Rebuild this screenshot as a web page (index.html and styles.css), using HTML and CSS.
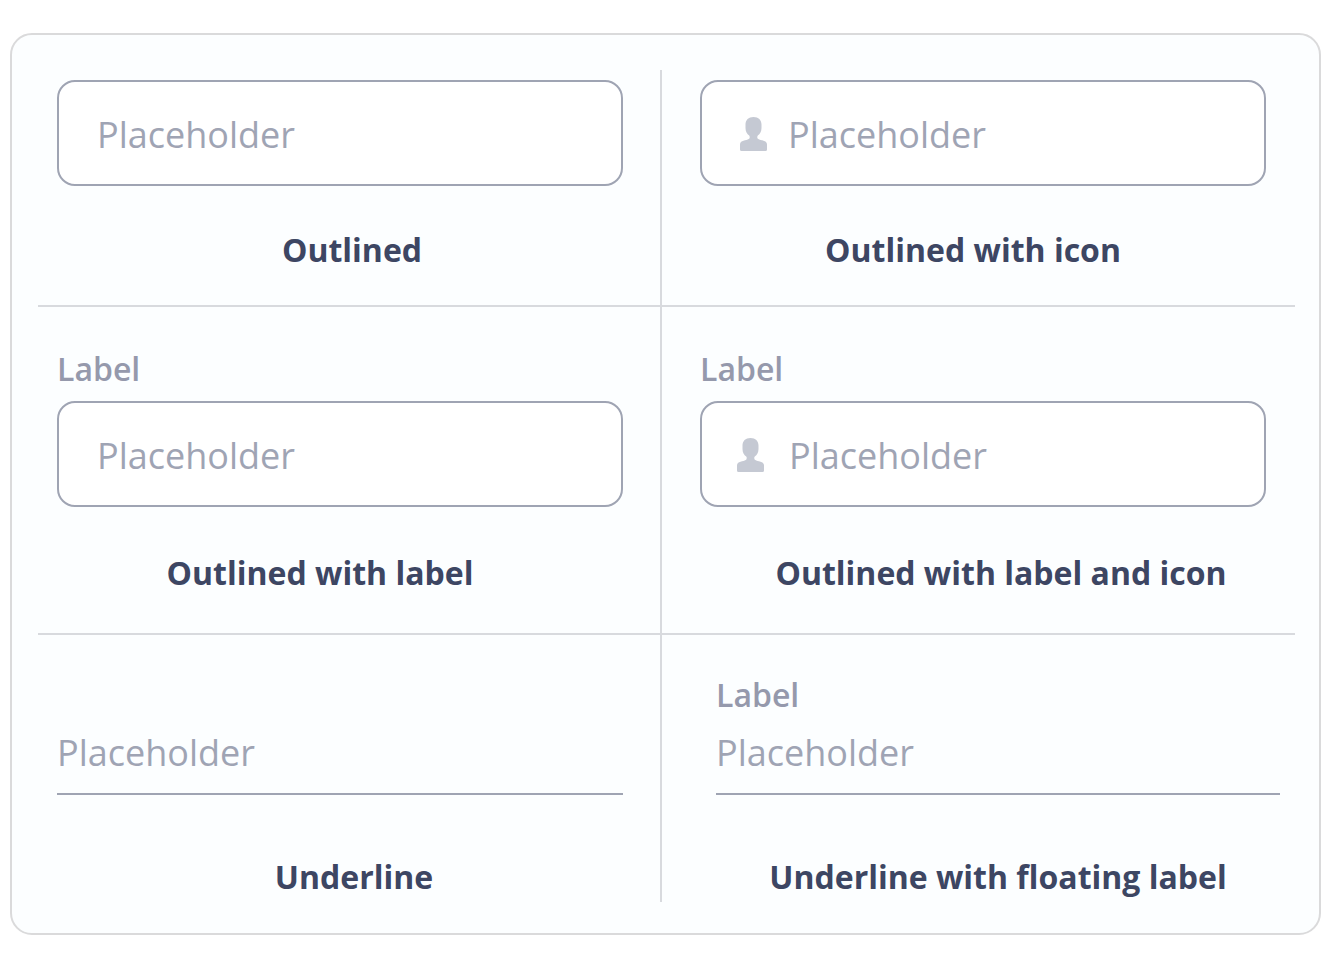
FILE: index.html
```html
<!DOCTYPE html>
<html lang="en">
<head>
<meta charset="utf-8">
<meta name="viewport" content="width=device-width, initial-scale=1">
<title>Text field variants</title>
<link rel="stylesheet" href="styles.css">
</head>
<body>
<main class="card">
  <div class="row row-first">
    <section class="cell cell-left">
      <div class="box"><input class="input" type="text" placeholder="Placeholder" aria-labelledby="c1"></div>
      <h2 class="caption nudge-24" id="c1">Outlined</h2>
    </section>
    <section class="cell cell-right">
      <div class="box box-icon">
        <svg class="icon" viewBox="0 0 28 34" aria-hidden="true"><path d="M13.500 0C18.500 0 21.500 3 21.500 7.500V11C21.500 14.500 20 17 17.800 18.600C17.200 19.200 17.100 20.600 17.600 21.400C18.200 22.300 20 22.700 22 23.200C25.500 24 27 25.300 27 27.500V32.500Q27 34 25.500 34H1.500Q0 34 0 32.500V27.500C0 25.300 1.500 24 5 23.200C7 22.700 8.800 22.300 9.400 21.400C9.900 20.600 9.800 19.200 9.200 18.600C7 17 5.500 14.500 5.500 11V7.500C5.500 3 8.500 0 13.500 0Z"/></svg>
        <input class="input" type="text" placeholder="Placeholder" aria-labelledby="c2">
      </div>
      <h2 class="caption nudge-back-20" id="c2">Outlined with icon</h2>
    </section>
  </div>
  <div class="row row-labelled">
    <section class="cell cell-left">
      <label class="label" for="f3">Label</label>
      <div class="box"><input class="input" id="f3" type="text" placeholder="Placeholder"></div>
      <h2 class="caption nudge-back-40">Outlined with label</h2>
    </section>
    <section class="cell cell-right">
      <label class="label" for="f4">Label</label>
      <div class="box box-icon box-icon-wide">
        <svg class="icon" viewBox="0 0 28 34" aria-hidden="true"><path d="M13.500 0C18.500 0 21.500 3 21.500 7.500V11C21.500 14.500 20 17 17.800 18.600C17.200 19.200 17.100 20.600 17.600 21.400C18.200 22.300 20 22.700 22 23.200C25.500 24 27 25.300 27 27.500V32.500Q27 34 25.500 34H1.500Q0 34 0 32.500V27.500C0 25.300 1.500 24 5 23.200C7 22.700 8.800 22.300 9.400 21.400C9.900 20.600 9.800 19.200 9.200 18.600C7 17 5.500 14.500 5.500 11V7.500C5.500 3 8.500 0 13.500 0Z"/></svg>
        <input class="input" id="f4" type="text" placeholder="Placeholder">
      </div>
      <h2 class="caption nudge-36">Outlined with label and icon</h2>
    </section>
  </div>
  <div class="row row-last">
    <section class="cell cell-left">
      <div class="line"><input class="input" type="text" placeholder="Placeholder" aria-labelledby="c5"></div>
      <h2 class="caption nudge-28" id="c5">Underline</h2>
    </section>
    <section class="cell cell-right cell-inset">
      <label class="label" for="f6">Label</label>
      <div class="line"><input class="input" id="f6" type="text" placeholder="Placeholder"></div>
      <h2 class="caption">Underline with floating label</h2>
    </section>
  </div>
</main>
</body>
</html>
```
FILE: styles.css
```css
* {
  box-sizing: border-box;
}

body {
  margin: 0;
  padding: 33px 15px 19px 10px;
  background: #fff;
  font-family: "Open Sans", "Noto Sans", sans-serif;
}

.card {
  padding: 35px 24px 31px 26px;
  border: 2px solid #dadadb;
  border-radius: 22px;
  background: #fcfeff;
}

.row {
  display: grid;
  grid-template-columns: minmax(0, 624fr) minmax(0, 633fr);
  border-bottom: 2px solid #d8dade;
}

.row-last {
  border-bottom: 0;
}

.cell {
  display: flex;
  flex-direction: column;
}

.cell-left {
  padding: 0 37px 0 19px;
  border-right: 2px solid #d8dade;
}

.cell-right {
  padding: 0 29px 0 38px;
}

.cell-inset {
  padding: 0 15px 0 54px;
}

.row-first .cell {
  padding-top: 10px;
  padding-bottom: 33px;
}

.row-labelled .cell {
  padding-top: 40px;
  padding-bottom: 38px;
}

.row-last .cell {
  justify-content: flex-end;
  padding-top: 38px;
  padding-bottom: 3px;
}

.label {
  align-self: flex-start;
  margin-bottom: 10px;
  color: #9599ac;
  font-size: 32px;
  font-weight: 600;
  line-height: 44px;
}

.box {
  display: flex;
  align-items: center;
  height: 106px;
  padding: 2px 38px 0;
  border: 2px solid #9fa4b3;
  border-radius: 18px;
  background: #fff;
}

.box-icon {
  gap: 20px;
}

.box-icon-wide {
  gap: 24px;
  padding-left: 35px;
}

.icon {
  flex: none;
  width: 28px;
  height: 34px;
  fill: #c5c9d3;
}

.input {
  flex: 1;
  min-width: 0;
  height: 50px;
  padding: 0;
  border: 0;
  outline: 0;
  background: transparent;
  color: #3d4663;
  font-family: inherit;
  font-size: 36px;
  font-weight: 400;
}

.input::placeholder {
  color: #9fa4b4;
  opacity: 1;
}

.line {
  display: flex;
  padding-bottom: 16px;
  border-bottom: 2px solid #9fa4b3;
}

.caption {
  margin: 44px 0 0;
  color: #3d4663;
  font-size: 32px;
  font-weight: 700;
  line-height: 44px;
  text-align: center;
}

.row-first .caption {
  margin-top: 42px;
}

.row-last .caption {
  margin-top: 60px;
}

.nudge-24 {
  padding-left: 24px;
}

.nudge-28 {
  padding-left: 28px;
}

.nudge-36 {
  padding-left: 36px;
}

.nudge-back-20 {
  padding-right: 20px;
}

.nudge-back-40 {
  padding-right: 40px;
}
```
